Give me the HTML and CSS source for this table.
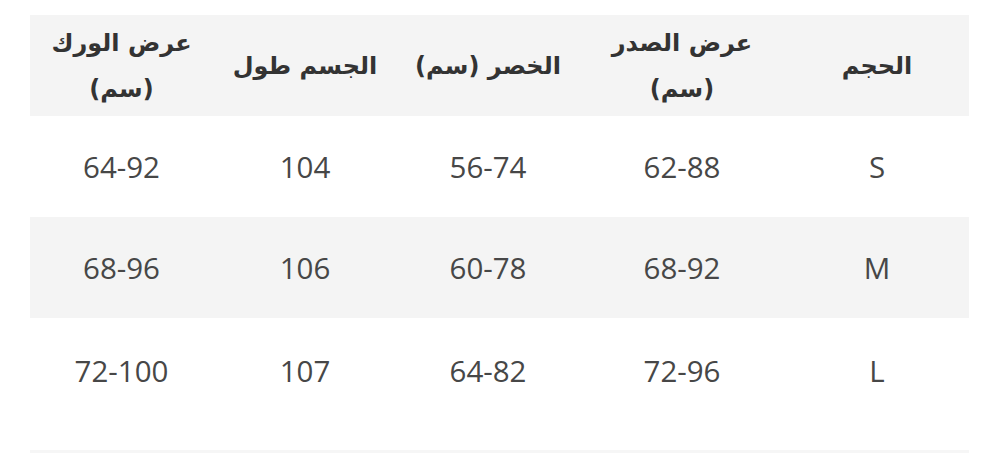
FILE: index.html
```html
<!DOCTYPE html>
<html lang="ar" dir="rtl">
<head>
<meta charset="utf-8">
<link rel="stylesheet" href="styles.css">
</head>
<body>
<div class="wrap">
  <table class="sizes">
    <colgroup>
      <col class="c1"><col class="c2"><col class="c3"><col class="c4"><col class="c5">
    </colgroup>
    <thead>
      <tr>
        <th>الحجم</th>
        <th>عرض الصدر<br>(سم)</th>
        <th>الخصر (سم)</th>
        <th>الجسم طول</th>
        <th>عرض الورك<br>(سم)</th>
      </tr>
    </thead>
    <tbody>
      <tr><td>S</td><td>62-88</td><td>56-74</td><td>104</td><td>64-92</td></tr>
      <tr class="alt"><td>M</td><td>68-92</td><td>60-78</td><td>106</td><td>68-96</td></tr>
      <tr class="last"><td>L</td><td>72-96</td><td>64-82</td><td>107</td><td>72-100</td></tr>
    </tbody>
  </table>
  <div class="foot"></div>
</div>
</body>
</html>
```
FILE: styles.css
```css
html, body {
  margin: 0;
  padding: 0;
  background: #ffffff;
}
.wrap {
  padding: 15px 31px 0 30px;
}
.sizes {
  width: 939px;
  border-collapse: collapse;
  table-layout: fixed;
}
.c1 { width: 184px; }
.c2 { width: 206px; }
.c3 { width: 182px; }
.c4 { width: 184px; }
.c5 { width: 183px; }
.sizes th {
  background: #f4f4f4;
  height: 101px;
  padding: 0;
  font-family: "DejaVu Sans", sans-serif;
  font-weight: bold;
  font-size: 24px;
  line-height: 46px;
  color: #333333;
  text-align: center;
  vertical-align: middle;
}
.sizes td {
  height: 101px;
  padding: 0;
  font-family: "Open Sans", sans-serif;
  font-size: 29.5px;
  color: #474747;
  text-align: center;
  vertical-align: middle;
  direction: ltr;
}
.sizes tr.alt td {
  background: #f4f4f4;
}
.sizes tr.last td {
  height: 104px;
}
.foot {
  margin-top: 28px;
  height: 4px;
  background: #f6f6f6;
}
```
